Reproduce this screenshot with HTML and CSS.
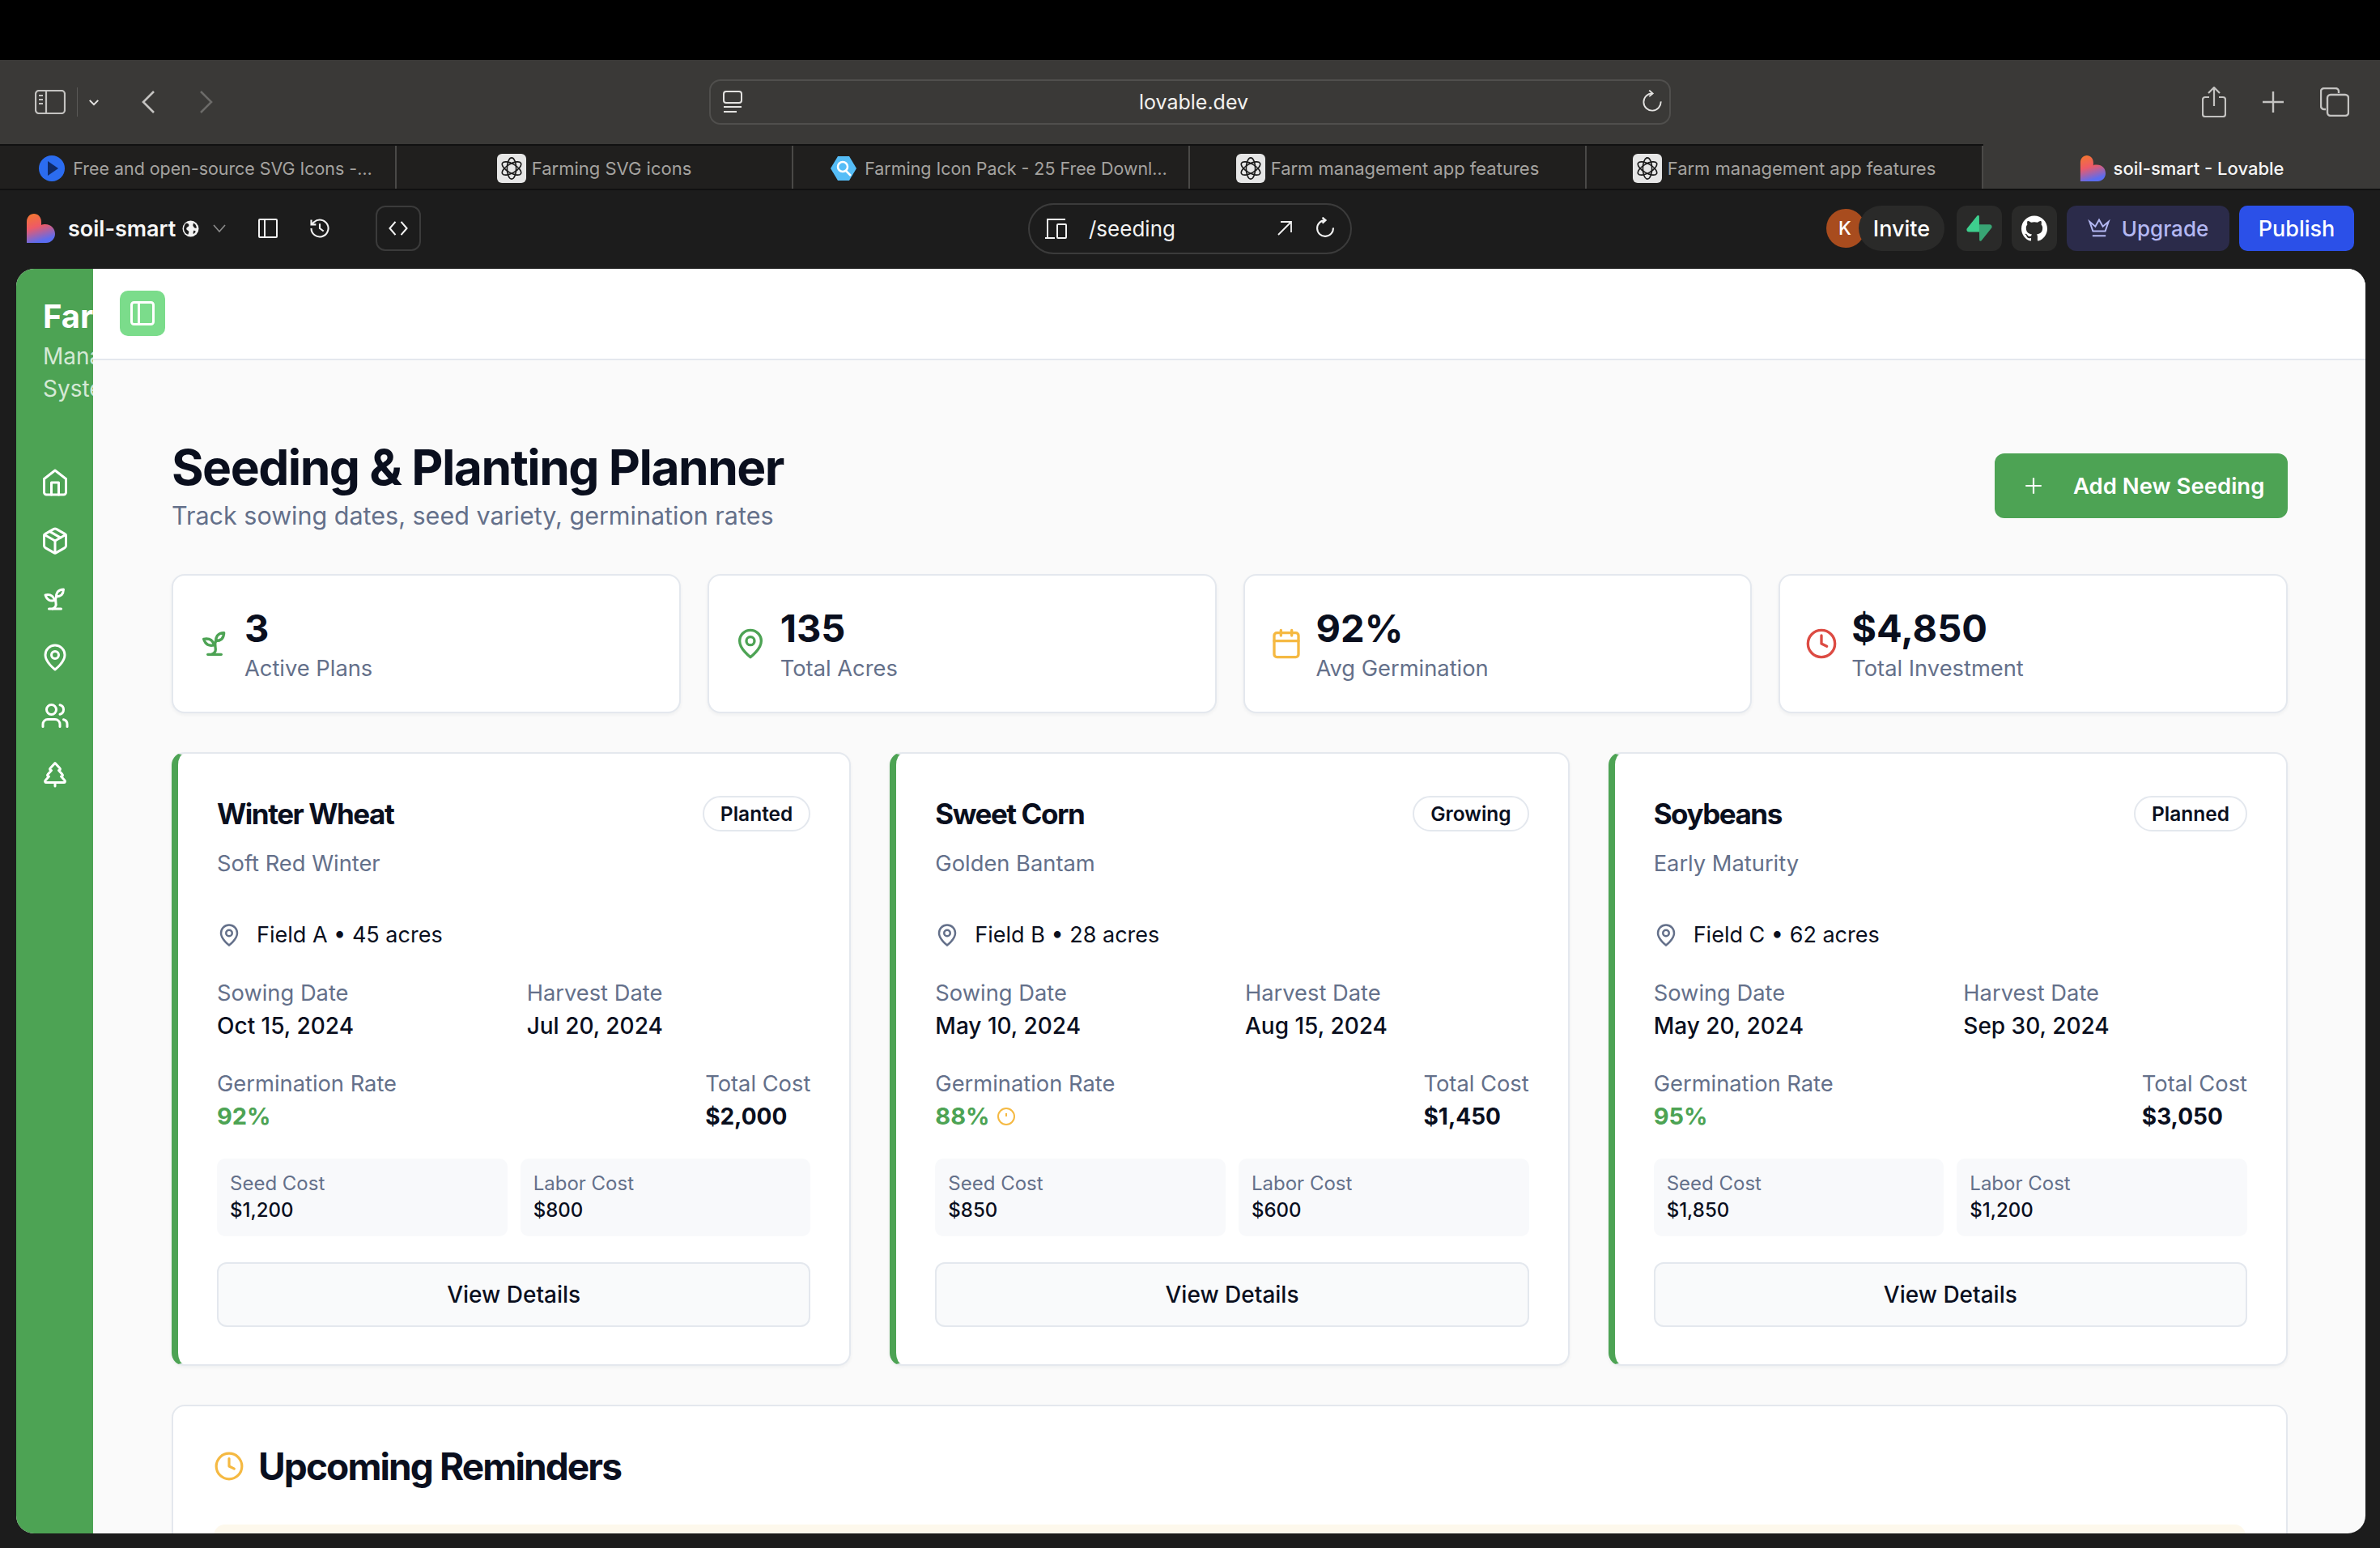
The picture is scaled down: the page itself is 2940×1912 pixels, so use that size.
FILE: index.html
```html
<!DOCTYPE html>
<html lang="en">
<head>
  <meta charset="UTF-8" />
  <title>soil-smart - Lovable</title>
  <link rel="stylesheet" href="styles.css">
</head>
<body>
  <svg class="sprite" xmlns="http://www.w3.org/2000/svg">
    <defs>
      <linearGradient id="heartFill" x1="0" y1="0" x2="0.3" y2="1">
        <stop offset="0" stop-color="#f4792b"/>
        <stop offset="0.5" stop-color="#ee5a67"/>
        <stop offset="1" stop-color="#5b6cf0"/>
      </linearGradient>
    </defs>
    <symbol id="i-heart" viewBox="0 0 36 36"><path fill="url(#heartFill)" d="M1 10C1 4 5 0 10 0s9 4 9 10v4c1-1 3-1 5-1 7 0 12 5 12 12 0 6-5 11-11 11H1Z"/></symbol>
    <symbol id="i-knot" viewBox="0 0 24 24"><g fill="none" stroke="#1a1a1a" stroke-width="1.300"><ellipse cx="12" cy="12" rx="4.500" ry="10.500"/><ellipse cx="12" cy="12" rx="4.500" ry="10.500" transform="rotate(60 12 12)"/><ellipse cx="12" cy="12" rx="4.500" ry="10.500" transform="rotate(120 12 12)"/></g></symbol>
    <symbol id="i-panel" viewBox="0 0 24 24"><rect x="3" y="3" width="18" height="18" rx="2"/><path d="M9 3v18"/></symbol>
    <symbol id="i-home" viewBox="0 0 24 24"><path d="m3 9 9-7 9 7v11a2 2 0 0 1-2 2H5a2 2 0 0 1-2-2z"/><path d="M9 22V12h6v10"/></symbol>
    <symbol id="i-package" viewBox="0 0 24 24"><path d="m7.500 4.270 9 5.150"/><path d="M21 8a2 2 0 0 0-1-1.730l-7-4a2 2 0 0 0-2 0l-7 4A2 2 0 0 0 3 8v8a2 2 0 0 0 1 1.730l7 4a2 2 0 0 0 2 0l7-4A2 2 0 0 0 21 16Z"/><path d="m3.300 7 8.700 5 8.700-5"/><path d="M12 22V12"/></symbol>
    <symbol id="i-sprout" viewBox="0 0 24 24"><path d="M7 20h10"/><path d="M10 20c5.500-2.500.8-6.400 3-10"/><path d="M9.500 9.400c1.100.8 1.800 2.200 2.300 3.700-2 .4-3.500.4-4.800-.3-1.200-.6-2.300-1.900-3-4.200 2.800-.5 4.400 0 5.500.8z"/><path d="M14.100 6a7 7 0 0 0-1.100 4c1.900-.1 3.300-.6 4.300-1.400 1-1 1.600-2.300 1.700-4.600-2.700.1-4 1-4.900 2z"/></symbol>
    <symbol id="i-pin" viewBox="0 0 24 24"><path d="M20 10c0 6-8 12-8 12s-8-6-8-12a8 8 0 0 1 16 0Z"/><circle cx="12" cy="10" r="3"/></symbol>
    <symbol id="i-users" viewBox="0 0 24 24"><path d="M16 21v-2a4 4 0 0 0-4-4H6a4 4 0 0 0-4 4v2"/><circle cx="9" cy="7" r="4"/><path d="M22 21v-2a4 4 0 0 0-3-3.870"/><path d="M16 3.130a4 4 0 0 1 0 7.750"/></symbol>
    <symbol id="i-tree" viewBox="0 0 24 24"><path d="m17 14 3 3.300a1 1 0 0 1-.7 1.700H4.700a1 1 0 0 1-.7-1.700L7 14h-.3a1 1 0 0 1-.7-1.700L9 9h-.2A1 1 0 0 1 8 7.300L12 3l4 4.300a1 1 0 0 1-.8 1.700H15l3 3.300a1 1 0 0 1-.7 1.700H17Z"/><path d="M12 22v-3"/></symbol>
    <symbol id="i-calendar" viewBox="0 0 24 24"><path d="M8 2v4M16 2v4"/><rect x="3" y="4" width="18" height="18" rx="2"/><path d="M3 10h18"/></symbol>
    <symbol id="i-clock" viewBox="0 0 24 24"><circle cx="12" cy="12" r="10"/><path d="M12 6v6l4 2"/></symbol>
    <symbol id="i-alert" viewBox="0 0 24 24"><circle cx="12" cy="12" r="10"/><path d="M12 8v4M12 16h.01"/></symbol>
    <symbol id="i-reload" viewBox="0 0 24 24"><path d="M20.500 11.500a8.500 8.500 0 1 1-8.500-8"/><path d="m9 .5 3.500 3-3.500 3"/></symbol>
  </svg>

  <div class="browser">
    <div class="topbar"></div>

    <header class="toolbar">
      <div class="toolbar-left">
        <svg class="tb-side" viewBox="0 0 38 30" fill="none" stroke="#c4c3c1" stroke-width="2.200"><rect x="1" y="1" width="36" height="28" rx="4"/><path d="M14 1v28M5 7h5M5 12h5M5 17h5"/></svg>
        <span class="tb-divider"></span>
        <svg class="tb-chev" viewBox="0 0 16 10" fill="none" stroke="#e4e3e1" stroke-width="2.400"><path d="m2 2 6 6 6-6"/></svg>
        <svg class="tb-back" viewBox="0 0 18 28" fill="none" stroke="#c4c3c1" stroke-width="2.600"><path d="M16 1 3 14l13 13"/></svg>
        <svg class="tb-forward" viewBox="0 0 18 28" fill="none" stroke="#6c6b69" stroke-width="2.600"><path d="m2 1 13 13L2 27"/></svg>
      </div>
      <div class="address">
        <svg class="addr-icon" viewBox="0 0 24 28" fill="none" stroke="#e4e3e1" stroke-width="2"><rect x="1" y="1" width="22" height="14" rx="3"/><path d="M1 20h22M1 26h16"/></svg>
        <span class="addr-url">lovable.dev</span>
        <svg class="addr-reload" viewBox="0 0 24 24" fill="none" stroke="#e4e3e1" stroke-width="1.500"><use href="#i-reload"/></svg>
      </div>
      <div class="toolbar-right">
        <svg class="tb-share" viewBox="0 0 30 38" fill="none" stroke="#c4c3c1" stroke-width="2.200"><path d="M9 13H4a3 3 0 0 0-3 3v18a3 3 0 0 0 3 3h22a3 3 0 0 0 3-3V16a3 3 0 0 0-3-3h-5M15 24V2M8 8l7-7 7 7"/></svg>
        <svg class="tb-plus" viewBox="0 0 28 28" fill="none" stroke="#c4c3c1" stroke-width="2.400"><path d="M14 1v26M1 14h26"/></svg>
        <svg class="tb-tabs" viewBox="0 0 36 36" fill="none" stroke="#c4c3c1" stroke-width="2.400"><path d="M7 27H5a4 4 0 0 1-4-4V5a4 4 0 0 1 4-4h14a4 4 0 0 1 4 4v2"/><rect x="9" y="9" width="26" height="26" rx="4"/></svg>
      </div>
    </header>

    <nav class="tabs">
      <div class="tab tab-long">
        <svg class="fav-round" viewBox="0 0 32 32"><circle cx="16" cy="16" r="16" fill="#2b6cf0"/><path d="M11 7l13 9-13 9z" fill="#0f2a66"/></svg>
        <span>Free and open-source SVG Icons -…</span>
      </div>
      <div class="tab">
        <span class="fav-knot"><svg viewBox="0 0 24 24"><use href="#i-knot"/></svg></span>
        <span>Farming SVG icons</span>
      </div>
      <div class="tab tab-long">
        <svg class="fav-round" viewBox="0 0 32 32"><path d="M9 1h14l9 15-9 15H9L0 16z" fill="#55bdf7"/><circle cx="15" cy="14" r="6" fill="none" stroke="#fff" stroke-width="2.500"/><path d="m19 19 6 6" stroke="#fff" stroke-width="2.500"/></svg>
        <span>Farming Icon Pack - 25 Free Downl…</span>
      </div>
      <div class="tab">
        <span class="fav-knot"><svg viewBox="0 0 24 24"><use href="#i-knot"/></svg></span>
        <span>Farm management app features</span>
      </div>
      <div class="tab">
        <span class="fav-knot"><svg viewBox="0 0 24 24"><use href="#i-knot"/></svg></span>
        <span>Farm management app features</span>
      </div>
      <div class="tab tab-active">
        <svg class="fav-heart"><use href="#i-heart"/></svg>
        <span>soil-smart - Lovable</span>
      </div>
    </nav>

    <div class="appbar">
      <div class="appbar-left">
        <svg class="logo"><use href="#i-heart"/></svg>
        <span class="project">soil-smart</span>
        <svg class="globe" viewBox="0 0 20 20"><circle cx="10" cy="10" r="9.500" fill="#f2f2f2"/><path d="M4 4c2-1 4 0 4 2S5 8 5 10s3 2 3 4l-1 3c-3-1-5-4-5-7 0-2 1-5 2-6ZM13 3c2 1 4 3 4 6-2 1-3 0-4-2s1-3 0-4ZM14 12l2 1c-1 2-2 3-3 3 0-2 0-3 1-4Z" fill="#1c1c1c"/></svg>
        <svg class="app-chev" viewBox="0 0 16 10" fill="none" stroke="#8b8b8b" stroke-width="1.600"><path d="m1 1 7 8 7-8"/></svg>
        <svg class="app-ic app-panel" viewBox="0 0 24 24" fill="none" stroke="#f2f2f2" stroke-width="2"><rect x="1" y="1" width="22" height="22" rx="1"/><path d="M8 1v22"/></svg>
        <svg class="app-ic app-history" viewBox="0 0 24 24" fill="none" stroke="#f2f2f2" stroke-width="1.800"><path d="M3 12a9 9 0 1 0 3-6.700L3 8"/><path d="M3 3v5h5M12 7v5l4 3"/></svg>
        <span class="code-btn"><svg viewBox="0 0 24 24" fill="none" stroke="#f2f2f2" stroke-width="1.800"><path d="m9 5-6 7 6 7M15 5l6 7-6 7"/></svg></span>
      </div>
      <div class="route">
        <svg class="route-device" viewBox="0 0 28 26" fill="none" stroke="#f2f2f2" stroke-width="2"><path d="M4 25V2h22M1 25h12"/><rect x="16" y="8" width="11" height="17" rx="1"/></svg>
        <span class="route-path">/seeding</span>
        <svg class="route-open" viewBox="0 0 20 20" fill="none" stroke="#f2f2f2" stroke-width="1.800"><path d="M2 18 18 2M5 2h13v13"/></svg>
        <svg class="route-reload" viewBox="0 0 24 24" fill="none" stroke="#f2f2f2" stroke-width="1.800"><use href="#i-reload"/></svg>
      </div>
      <div class="appbar-right">
        <span class="avatar">K</span>
        <span class="invite">Invite</span>
        <span class="square-btn"><svg viewBox="0 0 109 113"><path d="M63.700 110.300c-2.900 3.600-8.700 1.600-8.800-3l-1-67.400h45.900c8.300 0 12.900 9.600 7.700 16z" fill="#3ecf8e" opacity=".75"/><path d="M45.300 2.100c2.900-3.600 8.700-1.600 8.800 3l.4 67.400H9.200c-8.300 0-12.900-9.600-7.700-16z" fill="#3ecf8e"/></svg></span>
        <span class="square-btn"><svg viewBox="0 0 24 24" fill="#fff"><path d="M12 .297c-6.630 0-12 5.373-12 12 0 5.303 3.438 9.800 8.205 11.385.6.113.82-.258.82-.577 0-.285-.01-1.040-.015-2.040-3.338.724-4.042-1.610-4.042-1.610C4.422 18.070 3.633 17.700 3.633 17.700c-1.087-.744.084-.729.084-.729 1.205.084 1.838 1.236 1.838 1.236 1.070 1.835 2.809 1.305 3.495.998.108-.776.417-1.305.76-1.605-2.665-.3-5.466-1.332-5.466-5.930 0-1.310.465-2.380 1.235-3.220-.135-.303-.54-1.523.105-3.176 0 0 1.005-.322 3.300 1.230.96-.267 1.980-.399 3-.405 1.020.006 2.040.138 3 .405 2.280-1.552 3.285-1.230 3.285-1.230.645 1.653.24 2.873.12 3.176.765.84 1.230 1.910 1.230 3.220 0 4.610-2.805 5.625-5.475 5.920.42.36.81 1.096.81 2.220 0 1.606-.015 2.896-.015 3.286 0 .315.21.69.825.57C20.565 22.092 24 17.592 24 12.297c0-6.627-5.373-12-12-12"/></svg></span>
        <span class="upgrade"><svg viewBox="0 0 24 24" fill="none" stroke="#b4b8f2" stroke-width="1.700"><path d="m2 5 3.500 10h13L22 5l-6 5-4-7-4 7zM5 20h14"/></svg>Upgrade</span>
        <span class="publish">Publish</span>
      </div>
    </div>

    <div class="preview">
      <aside class="sidebar">
        <div class="brand">
          <h1>Farm</h1>
          <p>Management<br>System</p>
        </div>
        <div class="side-nav">
          <svg class="side-ic"><use href="#i-home"/></svg>
          <svg class="side-ic"><use href="#i-package"/></svg>
          <svg class="side-ic"><use href="#i-sprout"/></svg>
          <svg class="side-ic"><use href="#i-pin"/></svg>
          <svg class="side-ic"><use href="#i-users"/></svg>
          <svg class="side-ic"><use href="#i-tree"/></svg>
        </div>
      </aside>

      <div class="main">
        <div class="main-header">
          <span class="toggle"><svg><use href="#i-panel"/></svg></span>
        </div>

        <div class="content">
          <div class="page-head">
            <div>
              <h2 class="page-title">Seeding &amp; Planting Planner</h2>
              <p class="page-sub">Track sowing dates, seed variety, germination rates</p>
            </div>
            <button class="add-btn"><svg viewBox="0 0 24 24"><path d="M12 3v18M3 12h18"/></svg>Add New Seeding</button>
          </div>

          <section class="stats">
            <div class="stat">
              <svg class="stat-ic green"><use href="#i-sprout"/></svg>
              <div class="stat-text"><div class="stat-value">3</div><div class="stat-label">Active Plans</div></div>
            </div>
            <div class="stat">
              <svg class="stat-ic green"><use href="#i-pin"/></svg>
              <div class="stat-text"><div class="stat-value">135</div><div class="stat-label">Total Acres</div></div>
            </div>
            <div class="stat">
              <svg class="stat-ic amber"><use href="#i-calendar"/></svg>
              <div class="stat-text"><div class="stat-value">92%</div><div class="stat-label">Avg Germination</div></div>
            </div>
            <div class="stat">
              <svg class="stat-ic red"><use href="#i-clock"/></svg>
              <div class="stat-text"><div class="stat-value">$4,850</div><div class="stat-label">Total Investment</div></div>
            </div>
          </section>

          <section class="crops">
            <article class="crop">
              <div class="crop-head"><h3>Winter Wheat</h3><span class="badge">Planted</span></div>
              <p class="variety">Soft Red Winter</p>
              <p class="field"><svg><use href="#i-pin"/></svg>Field A • 45 acres</p>
              <div class="dates">
                <div><div class="lbl">Sowing Date</div><div class="val">Oct 15, 2024</div></div>
                <div><div class="lbl">Harvest Date</div><div class="val">Jul 20, 2024</div></div>
              </div>
              <div class="rates">
                <div><div class="lbl">Germination Rate</div><div class="rate">92%</div></div>
                <div><div class="lbl">Total Cost</div><div class="total">$2,000</div></div>
              </div>
              <div class="costs">
                <div class="cost"><div class="cost-lbl">Seed Cost</div><div class="cost-val">$1,200</div></div>
                <div class="cost"><div class="cost-lbl">Labor Cost</div><div class="cost-val">$800</div></div>
              </div>
              <button class="details">View Details</button>
            </article>

            <article class="crop">
              <div class="crop-head"><h3>Sweet Corn</h3><span class="badge">Growing</span></div>
              <p class="variety">Golden Bantam</p>
              <p class="field"><svg><use href="#i-pin"/></svg>Field B • 28 acres</p>
              <div class="dates">
                <div><div class="lbl">Sowing Date</div><div class="val">May 10, 2024</div></div>
                <div><div class="lbl">Harvest Date</div><div class="val">Aug 15, 2024</div></div>
              </div>
              <div class="rates">
                <div><div class="lbl">Germination Rate</div><div class="rate">88%<svg class="rate-warn"><use href="#i-alert"/></svg></div></div>
                <div><div class="lbl">Total Cost</div><div class="total">$1,450</div></div>
              </div>
              <div class="costs">
                <div class="cost"><div class="cost-lbl">Seed Cost</div><div class="cost-val">$850</div></div>
                <div class="cost"><div class="cost-lbl">Labor Cost</div><div class="cost-val">$600</div></div>
              </div>
              <button class="details">View Details</button>
            </article>

            <article class="crop">
              <div class="crop-head"><h3>Soybeans</h3><span class="badge">Planned</span></div>
              <p class="variety">Early Maturity</p>
              <p class="field"><svg><use href="#i-pin"/></svg>Field C • 62 acres</p>
              <div class="dates">
                <div><div class="lbl">Sowing Date</div><div class="val">May 20, 2024</div></div>
                <div><div class="lbl">Harvest Date</div><div class="val">Sep 30, 2024</div></div>
              </div>
              <div class="rates">
                <div><div class="lbl">Germination Rate</div><div class="rate">95%</div></div>
                <div><div class="lbl">Total Cost</div><div class="total">$3,050</div></div>
              </div>
              <div class="costs">
                <div class="cost"><div class="cost-lbl">Seed Cost</div><div class="cost-val">$1,850</div></div>
                <div class="cost"><div class="cost-lbl">Labor Cost</div><div class="cost-val">$1,200</div></div>
              </div>
              <button class="details">View Details</button>
            </article>
          </section>

          <section class="reminders">
            <h3><svg><use href="#i-clock"/></svg>Upcoming Reminders</h3>
            <div class="reminder"></div>
          </section>
        </div>
      </div>
    </div>
  </div>
</body>
</html>
```

FILE: styles.css
```css
* {
  box-sizing: border-box;
}
html, body {
  margin: 0;
  padding: 0;
  background: #1c1c1c;
}
body {
  font-family: Inter, "Noto Sans", sans-serif;
  color: #0a0f1e;
  overflow: hidden;
}
h1, h2, h3, p {
  margin: 0;
}
svg {
  display: block;
  flex: none;
}
.sprite {
  width: 0;
  height: 0;
  position: absolute;
}
.browser {
  width: 2940px;
  height: 1912px;
  display: flex;
  flex-direction: column;
  overflow: hidden;
}
.topbar {
  height: 74px;
  background: #000;
}

/* safari toolbar */
.toolbar {
  height: 104px;
  background: #3a3937;
  display: grid;
  grid-template-columns: 1fr 1188px 1fr;
  align-items: center;
}
.toolbar-left {
  display: flex;
  align-items: center;
  padding-left: 43px;
}
.tb-side { width: 38px; height: 30px; }
.tb-divider { width: 1px; height: 36px; background: #5a5957; margin-left: 14px; }
.tb-chev { width: 14px; height: 9px; margin-left: 13px; }
.tb-back { width: 18px; height: 28px; margin-left: 51px; }
.tb-forward { width: 18px; height: 28px; margin-left: 54px; }
.address {
  height: 56px;
  border: 2px solid #504f4d;
  border-radius: 14px;
  background: #3a3937;
  display: grid;
  grid-template-columns: 1fr auto 1fr;
  align-items: center;
  padding: 0 6px 0 15px;
}
.addr-icon { width: 24px; height: 28px; }
.addr-url { color: #f2f1ef; font-size: 25px; }
.addr-reload { width: 30px; height: 30px; justify-self: end; }
.toolbar-right {
  display: flex;
  align-items: center;
  justify-content: flex-end;
  padding-right: 38px;
}
.tb-share { width: 30px; height: 38px; }
.tb-plus { width: 28px; height: 28px; margin-left: 44px; }
.tb-tabs { width: 36px; height: 36px; margin-left: 44px; }

/* tab strip */
.tabs {
  height: 57px;
  display: grid;
  grid-template-columns: repeat(6, 490px);
  background: #201f1e;
  border-top: 2px solid #111;
  border-bottom: 2px solid #111;
}
.tab {
  display: flex;
  align-items: center;
  justify-content: center;
  gap: 10px;
  color: #a5a3a0;
  font-size: 22px;
  border-right: 2px solid #4a4947;
  white-space: nowrap;
  padding-top: 2px;
}
.tab-long {
  padding-left: 20px;
  font-size: 21.400px;
}
.tab-active {
  background: #3a3937;
  color: #f5f5f5;
  font-weight: 500;
  border-right: none;
  margin-top: -2px;
  padding-top: 4px;
}
.fav-round { width: 32px; height: 32px; }
.fav-knot {
  width: 36px;
  height: 36px;
  border-radius: 6px;
  background: #e6e6e6;
  padding: 3px;
  flex: none;
  margin-right: -3px;
}
.fav-knot svg { width: 30px; height: 30px; }
.fav-heart { width: 32px; height: 32px; }

/* lovable bar */
.appbar {
  height: 97px;
  background: #1c1c1c;
  display: grid;
  grid-template-columns: 1fr 400px 1fr;
  align-items: center;
  padding-bottom: 3px;
}
.appbar-left {
  display: flex;
  align-items: center;
  padding-left: 32px;
}
.logo { width: 36px; height: 36px; }
.project { color: #f7f7f7; font-size: 27px; font-weight: 600; margin-left: 16px; }
.globe { width: 21px; height: 21px; margin-left: 8px; }
.app-chev { width: 16px; height: 10px; margin-left: 17px; }
.app-ic { width: 24px; height: 24px; }
.app-panel { margin-left: 40px; }
.app-history { width: 28px; height: 28px; margin-left: 38px; }
.code-btn {
  width: 56px;
  height: 56px;
  border: 2px solid #3b3b3b;
  border-radius: 12px;
  margin-left: 55px;
  display: flex;
  align-items: center;
  justify-content: center;
}
.code-btn svg { width: 28px; height: 28px; }
.route {
  height: 63px;
  border: 2px solid #3b3b3b;
  border-radius: 32px;
  display: flex;
  align-items: center;
  padding: 0 17px 0 18px;
}
.route-device { width: 28px; height: 26px; }
.route-path { color: #f2f2f2; font-size: 26px; margin-left: 27px; flex: 1; }
.route-open { width: 20px; height: 20px; }
.route-reload { width: 28px; height: 28px; margin-left: 26px; }
.appbar-right {
  display: flex;
  align-items: center;
  justify-content: flex-end;
  padding-right: 32px;
}
.avatar {
  width: 48px;
  height: 48px;
  border-radius: 50%;
  background: #a84c1e;
  color: #fff;
  font-size: 23px;
  font-weight: 500;
  display: flex;
  align-items: center;
  padding-left: 15px;
}
.invite {
  width: 106px;
  height: 56px;
  border-radius: 28px;
  background: #2a2a29;
  color: #fff;
  font-size: 27px;
  font-weight: 500;
  display: flex;
  align-items: center;
  justify-content: center;
  margin-left: -8px;
  margin-right: 3px;
}
.square-btn {
  width: 56px;
  height: 56px;
  border-radius: 12px;
  background: #2a2a29;
  display: flex;
  align-items: center;
  justify-content: center;
  margin-left: 12px;
}
.square-btn svg { width: 32px; height: 32px; }
.upgrade {
  width: 201px;
  height: 56px;
  border-radius: 12px;
  background: #2b2b4a;
  color: #b4b8f2;
  font-size: 26px;
  font-weight: 500;
  display: flex;
  align-items: center;
  justify-content: center;
  gap: 14px;
  margin-left: 12px;
}
.upgrade svg { width: 28px; height: 28px; }
.publish {
  width: 142px;
  height: 56px;
  border-radius: 10px;
  background: #2b50e8;
  color: #fff;
  font-size: 27px;
  font-weight: 500;
  display: flex;
  align-items: center;
  justify-content: center;
  margin-left: 12px;
}

/* preview frame */
.preview {
  flex: 1;
  margin: 0 18px 18px 20px;
  border-radius: 22px;
  overflow: hidden;
  display: flex;
  background: #fafafa;
}
.sidebar {
  width: 95px;
  flex: none;
  background: #4da354;
  color: #fff;
  overflow: hidden;
  white-space: nowrap;
  padding-top: 34px;
}
.brand { padding-left: 33px; }
.brand h1 { font-size: 40px; line-height: 50px; font-weight: 700; }
.brand p { font-size: 28px; line-height: 40px; color: #d5e9d6; margin-top: 4px; }
.side-nav {
  display: flex;
  flex-direction: column;
  align-items: center;
  gap: 36px;
  padding-top: 78px;
}
.side-ic {
  width: 36px;
  height: 36px;
  fill: none;
  stroke: #fff;
  stroke-width: 2;
  stroke-linecap: round;
  stroke-linejoin: round;
}

.main {
  flex: 1;
  display: flex;
  flex-direction: column;
  min-width: 0;
}
.main-header {
  height: 113px;
  background: #fff;
  border-bottom: 2px solid #e4e8ee;
  padding: 27px 0 0 33px;
  flex: none;
}
.toggle {
  width: 56px;
  height: 56px;
  border-radius: 10px;
  background: #7bdc8b;
  display: flex;
  align-items: center;
  justify-content: center;
}
.toggle svg {
  width: 36px;
  height: 36px;
  fill: none;
  stroke: #fff;
  stroke-width: 2;
}
.content {
  padding: 96px 96px 0 97px;
}

.page-head {
  display: flex;
  justify-content: space-between;
  align-items: center;
}
.page-title {
  font-size: 60.500px;
  line-height: 72px;
  font-weight: 700;
  letter-spacing: -0.025em;
}
.page-sub {
  font-size: 30.500px;
  line-height: 44px;
  color: #64708a;
  margin-top: 2px;
}
.add-btn {
  width: 362px;
  height: 80px;
  border: none;
  border-radius: 12px;
  background: #4da354;
  color: #fff;
  font-family: inherit;
  font-size: 27.500px;
  font-weight: 600;
  display: flex;
  align-items: center;
  padding-left: 35px;
  gap: 36px;
}
.add-btn svg {
  width: 26px;
  height: 26px;
  stroke: #fff;
  stroke-width: 2;
  fill: none;
}

.stats {
  display: grid;
  grid-template-columns: repeat(4, 1fr);
  gap: 33px;
  margin-top: 50px;
}
.stat {
  height: 172px;
  background: #fff;
  border: 2px solid #e4e8ee;
  border-radius: 16px;
  box-shadow: 0 2px 4px rgba(20, 30, 60, 0.05);
  display: flex;
  align-items: center;
  padding: 0 31px;
  gap: 17px;
}
.stat-ic {
  width: 40px;
  height: 40px;
  fill: none;
  stroke-width: 2;
  stroke-linecap: round;
  stroke-linejoin: round;
}
.green { stroke: #4da354; }
.amber { stroke: #f5b942; }
.red { stroke: #dc4b43; }
.stat-text {
  padding-top: 2px;
}
.stat-value {
  font-size: 47px;
  line-height: 60px;
  font-weight: 700;
}
.stat-label {
  font-size: 27.300px;
  line-height: 40px;
  color: #64708a;
}

.crops {
  display: grid;
  grid-template-columns: repeat(3, 1fr);
  gap: 48px;
  margin-top: 48px;
}
.crop {
  height: 758px;
  background: #fff;
  border: 2px solid #e4e8ee;
  border-left: 8px solid #4da354;
  border-radius: 16px;
  box-shadow: 0 2px 4px rgba(20, 30, 60, 0.05);
  padding: 52px 48px 0 48px;
}
.crop-head {
  display: flex;
  justify-content: space-between;
  align-items: center;
  height: 44px;
}
.crop-head h3 {
  font-size: 35px;
  font-weight: 700;
  letter-spacing: -0.042em;
}
.badge {
  height: 44px;
  padding: 0 20px;
  border: 2px solid #e4e8ee;
  border-radius: 22px;
  font-size: 24.500px;
  font-weight: 600;
  display: flex;
  align-items: center;
}
.variety {
  font-size: 27.300px;
  line-height: 40px;
  color: #64708a;
  margin-top: 20px;
}
.field {
  font-size: 27px;
  line-height: 40px;
  display: flex;
  align-items: center;
  gap: 19px;
  margin-top: 48px;
}
.field svg {
  width: 30px;
  height: 30px;
  fill: none;
  stroke: #64708a;
  stroke-width: 2;
}
.dates {
  display: grid;
  grid-template-columns: 1fr 1fr;
  gap: 32px;
  margin-top: 32px;
}
.lbl {
  font-size: 27.300px;
  line-height: 40px;
  color: #64708a;
}
.val {
  font-size: 28px;
  line-height: 40px;
  font-weight: 500;
}
.rates {
  display: flex;
  justify-content: space-between;
  margin-top: 32px;
}
.rate {
  font-size: 29px;
  line-height: 40px;
  font-weight: 700;
  color: #4da354;
  display: flex;
  align-items: center;
  gap: 8px;
}
.rate-warn {
  width: 24px;
  height: 24px;
  fill: none;
  stroke: #f5b942;
  stroke-width: 2;
}
.total {
  font-size: 28px;
  line-height: 40px;
  font-weight: 700;
}
.costs {
  display: grid;
  grid-template-columns: 1fr 1fr;
  gap: 16px;
  margin-top: 32px;
}
.cost {
  height: 96px;
  background: #f8f9fb;
  border-radius: 10px;
  padding: 15px 16px;
}
.cost-lbl {
  font-size: 24px;
  line-height: 32px;
  color: #64708a;
}
.cost-val {
  font-size: 24px;
  line-height: 34px;
  font-weight: 500;
}
.details {
  display: block;
  width: 100%;
  height: 80px;
  margin-top: 32px;
  background: #f9fafb;
  border: 2px solid #e4e8ee;
  border-radius: 12px;
  color: #0a0f1e;
  font-family: inherit;
  font-size: 28px;
  font-weight: 500;
}

.reminders {
  margin-top: 48px;
  height: 400px;
  background: #fff;
  border: 2px solid #e4e8ee;
  border-radius: 16px;
  padding: 46px 50px;
}
.reminders h3 {
  display: flex;
  align-items: center;
  gap: 17px;
  font-size: 46px;
  line-height: 56px;
  font-weight: 700;
  letter-spacing: -0.041em;
}
.reminders h3 svg {
  width: 38px;
  height: 38px;
  fill: none;
  stroke: #f5b942;
  stroke-width: 2;
  stroke-linecap: round;
  stroke-linejoin: round;
}
.reminder {
  height: 120px;
  margin-top: 44px;
  border-radius: 14px;
  background: #fdf8ec;
}
```
